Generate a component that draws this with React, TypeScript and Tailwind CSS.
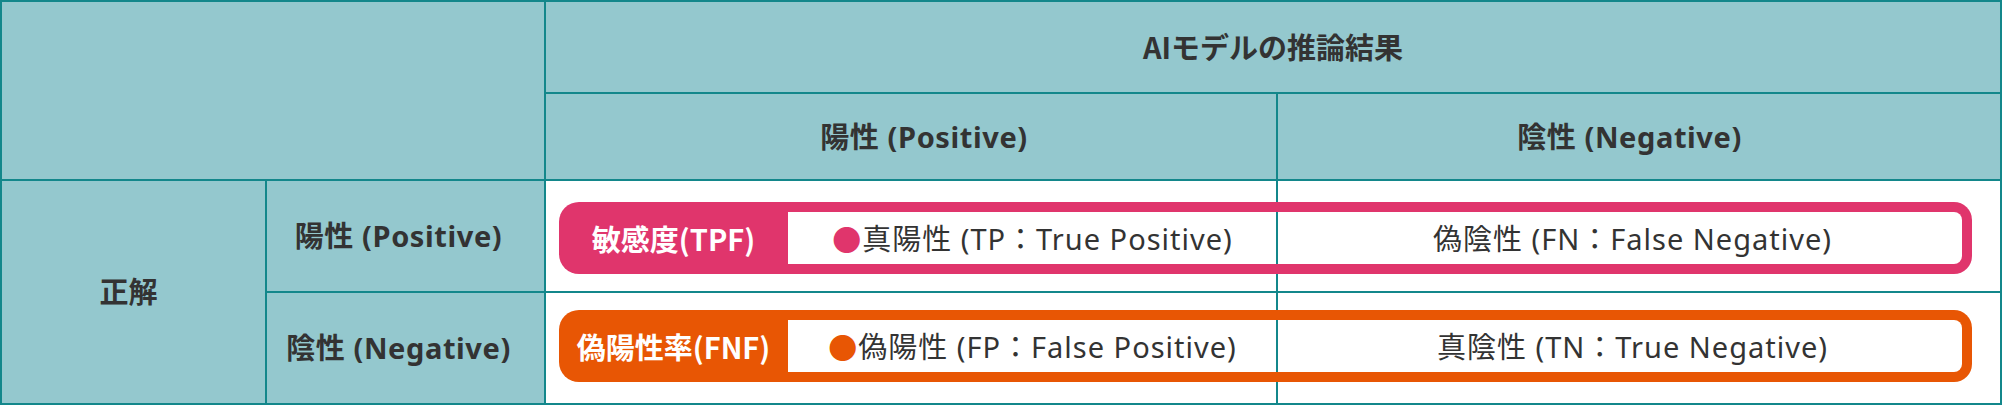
import React from "react";

const headBg = "bg-[#94c8ce]";

function Pill({
  color,
  label,
  left,
  right,
  top,
}: {
  color: "pink" | "orange";
  label: string;
  left: string;
  right: string;
  top: string;
}) {
  const bg = color === "pink" ? "bg-[#e0356c]" : "bg-[#e85604]";
  const border = color === "pink" ? "border-[#e0356c]" : "border-[#e85604]";
  const dot = color === "pink" ? "text-[#e0356c]" : "text-[#e85604]";
  return (
    <div className={`absolute ${top} left-[13px] right-[28px] h-[72px] flex`}>
      <div
        className={`w-[229px] ${bg} rounded-l-[20px] flex items-center justify-center text-white font-bold text-[29px] leading-none font-['Noto_Sans_CJK_JP',sans-serif]`}
      >
        {label}
      </div>
      <div className={`flex-1 flex border-[10px] border-l-0 ${border} rounded-r-[18px]`}>
        <div className="w-[489px] flex items-center justify-center text-[29px] leading-none tracking-[1px]">
          <span className={`${dot} font-['Noto_Sans_CJK_JP',sans-serif]`}>●</span>
          <span>{left}</span>
        </div>
        <div className="flex-1 flex items-center justify-center text-[29px] leading-none tracking-[1px] pl-[26px]">
          {right}
        </div>
      </div>
    </div>
  );
}

export default function App() {
  return (
    <div className="w-[2002px] h-[405px] bg-[#13878b] p-[2px] grid grid-cols-[263px_277px_730px_722px] grid-rows-[90px_85px_110px_110px] gap-[2px] font-['Noto_Sans','Noto_Sans_CJK_JP',sans-serif] text-[#333333]">
      <div className={`col-span-2 row-span-2 ${headBg}`} />
      <div className={`col-span-2 ${headBg} flex items-center justify-center font-bold text-[29px] font-['Noto_Sans_CJK_JP',sans-serif]`}>
        AIモデルの推論結果
      </div>
      <div className={`${headBg} flex items-center justify-center font-bold text-[29px] tracking-[0.6px] pl-[26px]`}>
        陽性 (Positive)
      </div>
      <div className={`${headBg} flex items-center justify-center font-bold text-[29px] tracking-[0.6px] pr-[19px]`}>
        陰性 (Negative)
      </div>
      <div className={`row-span-2 ${headBg} flex items-center justify-center font-bold text-[29px] pr-[10px]`}>
        正解
      </div>
      <div className={`${headBg} flex items-center justify-center font-bold text-[29px] tracking-[0.6px] pr-[14px]`}>
        陽性 (Positive)
      </div>
      <div className="col-span-2 relative grid grid-cols-[730px_722px] gap-[2px]">
        <div className="bg-white" />
        <div className="bg-white" />
        <Pill
          color="pink"
          label="敏感度(TPF)"
          left="真陽性 (TP：True Positive)"
          right="偽陰性 (FN：False Negative)"
          top="top-[21px]"
        />
      </div>
      <div className={`${headBg} flex items-center justify-center font-bold text-[29px] tracking-[0.6px] pr-[14px]`}>
        陰性 (Negative)
      </div>
      <div className="col-span-2 relative grid grid-cols-[730px_722px] gap-[2px]">
        <div className="bg-white" />
        <div className="bg-white" />
        <Pill
          color="orange"
          label="偽陽性率(FNF)"
          left="偽陽性 (FP：False Positive)"
          right="真陰性 (TN：True Negative)"
          top="top-[17px]"
        />
      </div>
    </div>
  );
}
